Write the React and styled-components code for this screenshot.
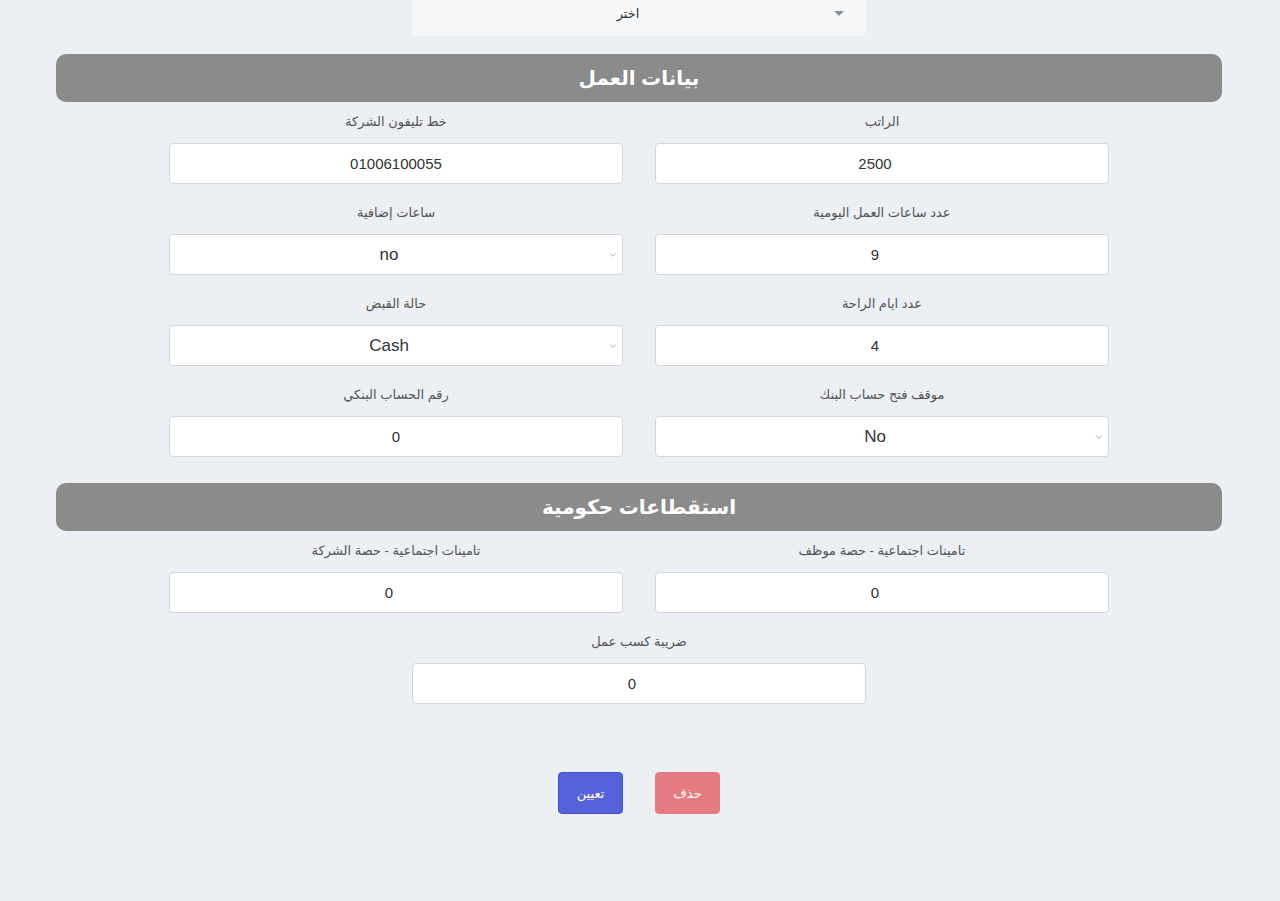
import React from "react";
import styled, { createGlobalStyle } from "styled-components";
import { ChevronDown } from "lucide-react";

const GlobalStyle = createGlobalStyle`
  html, body {
    margin: 0;
    padding: 0;
    background: #eceff4;
    font-family: "Liberation Sans", "DejaVu Sans", sans-serif;
  }
`;

const Page = styled.div`
  width: 1166px;
  margin: 0 0 0 56px;
  padding-bottom: 88px;
  direction: rtl;
`;

const TopPicker = styled.div`
  position: relative;
  width: 454px;
  height: 36px;
  margin: 0 auto 18px;
  background: #f6f8fa;
  border-radius: 0 0 6px 6px;
  text-align: center;
  line-height: 28px;
  padding-right: 22px;
  box-sizing: border-box;
  font-size: 13px;
  color: #333;
`;

const Caret = styled.span`
  position: absolute;
  right: 22px;
  top: 11px;
  width: 0;
  height: 0;
  border-left: 5px solid transparent;
  border-right: 5px solid transparent;
  border-top: 5px solid #8a8f96;
`;

const SectionBar = styled.h2`
  margin: 0;
  height: 48px;
  border-radius: 10px;
  background: #8b8b8b;
  color: #fff;
  font-size: 20px;
  font-weight: bold;
  display: flex;
  align-items: center;
  justify-content: center;
`;

const FieldGrid = styled.div`
  display: grid;
  grid-template-columns: 454px 454px;
  column-gap: 32px;
  row-gap: 19px;
  justify-content: center;
  padding: 10px 0 ${(p) => p.$bottom || 0}px;
`;

const Field = styled.label`
  display: flex;
  flex-direction: column;
  align-items: stretch;
  gap: 11px;
  grid-column: ${(p) => (p.$wide ? "1 / -1" : "auto")};
  width: 454px;
  justify-self: center;
`;

const Caption = styled.span`
  display: block;
  text-align: center;
  font-size: 13px;
  line-height: 20px;
  color: #555;
`;

const TextBox = styled.input`
  box-sizing: border-box;
  width: 100%;
  height: 41px;
  padding: 0 ${(p) => (p.$num ? 16 : 2)}px 0 2px;
  direction: ltr;
  border: 1px solid #d3d6db;
  border-radius: 4px;
  background: #fff;
  text-align: center;
  font-family: "Liberation Sans", sans-serif;
  font-size: 15px;
  color: #333;
  outline: none;
`;

const SelectWrap = styled.div`
  position: relative;
  height: 41px;
  svg {
    position: absolute;
    right: 5px;
    top: 16px;
    color: #777;
    pointer-events: none;
  }
`;

const SelectBox = styled.select`
  box-sizing: border-box;
  width: 100%;
  height: 41px;
  padding: 0 16px 0 2px;
  appearance: none;
  direction: ltr;
  border: 1px solid #d3d6db;
  border-radius: 4px;
  background: #fff;
  text-align: center;
  text-align-last: center;
  font-family: "Liberation Sans", sans-serif;
  font-size: 17px;
  color: #333;
  outline: none;
`;

const Actions = styled.div`
  display: flex;
  justify-content: center;
  gap: 32px;
  margin-top: 68px;
`;

const Button = styled.button`
  width: 65px;
  height: 42px;
  border: 1px solid ${(p) => (p.$danger ? "#e47a82" : "#4452d0")};
  border-radius: 4px;
  background: ${(p) => (p.$danger ? "#e67b83" : "#5662dc")};
  color: #fff;
  font-family: "DejaVu Sans", sans-serif;
  font-size: 13px;
  cursor: pointer;
`;

const Input = ({ label, value, wide, num }) => (
  <Field $wide={wide}>
    <Caption>{label}</Caption>
    <TextBox defaultValue={value} $num={num} />
  </Field>
);

const Select = ({ label, value, options }) => (
  <Field>
    <Caption>{label}</Caption>
    <SelectWrap>
      <SelectBox defaultValue={value}>
        {options.map((o) => (
          <option key={o}>{o}</option>
        ))}
      </SelectBox>
      <ChevronDown size={10} strokeWidth={1.5} />
    </SelectWrap>
  </Field>
);

export default function App() {
  return (
    <>
      <GlobalStyle />
      <Page>
        <TopPicker>
          اختر
          <Caret />
        </TopPicker>

        <SectionBar>بيانات العمل</SectionBar>
        <FieldGrid $bottom={26}>
          <Input label="الراتب" value="2500" num />
          <Input label="خط تليفون الشركة" value="01006100055" />
          <Input label="عدد ساعات العمل اليومية" value="9" num />
          <Select label="ساعات إضافية" value="no" options={["no", "yes"]} />
          <Input label="عدد ايام الراحة" value="4" num />
          <Select label="حالة القبض" value="Cash" options={["Cash", "Bank"]} />
          <Select label="موقف فتح حساب البنك" value="No" options={["No", "Yes"]} />
          <Input label="رقم الحساب البنكي" value="0" />
        </FieldGrid>

        <SectionBar>استقطاعات حكومية</SectionBar>
        <FieldGrid>
          <Input label="تامينات اجتماعية - حصة موظف" value="0" num />
          <Input label="تامينات اجتماعية - حصة الشركة" value="0" num />
          <Input label="ضريبة كسب عمل" value="0" wide num />
        </FieldGrid>

        <Actions>
          <Button $danger>حذف</Button>
          <Button>تعيين</Button>
        </Actions>
      </Page>
    </>
  );
}
